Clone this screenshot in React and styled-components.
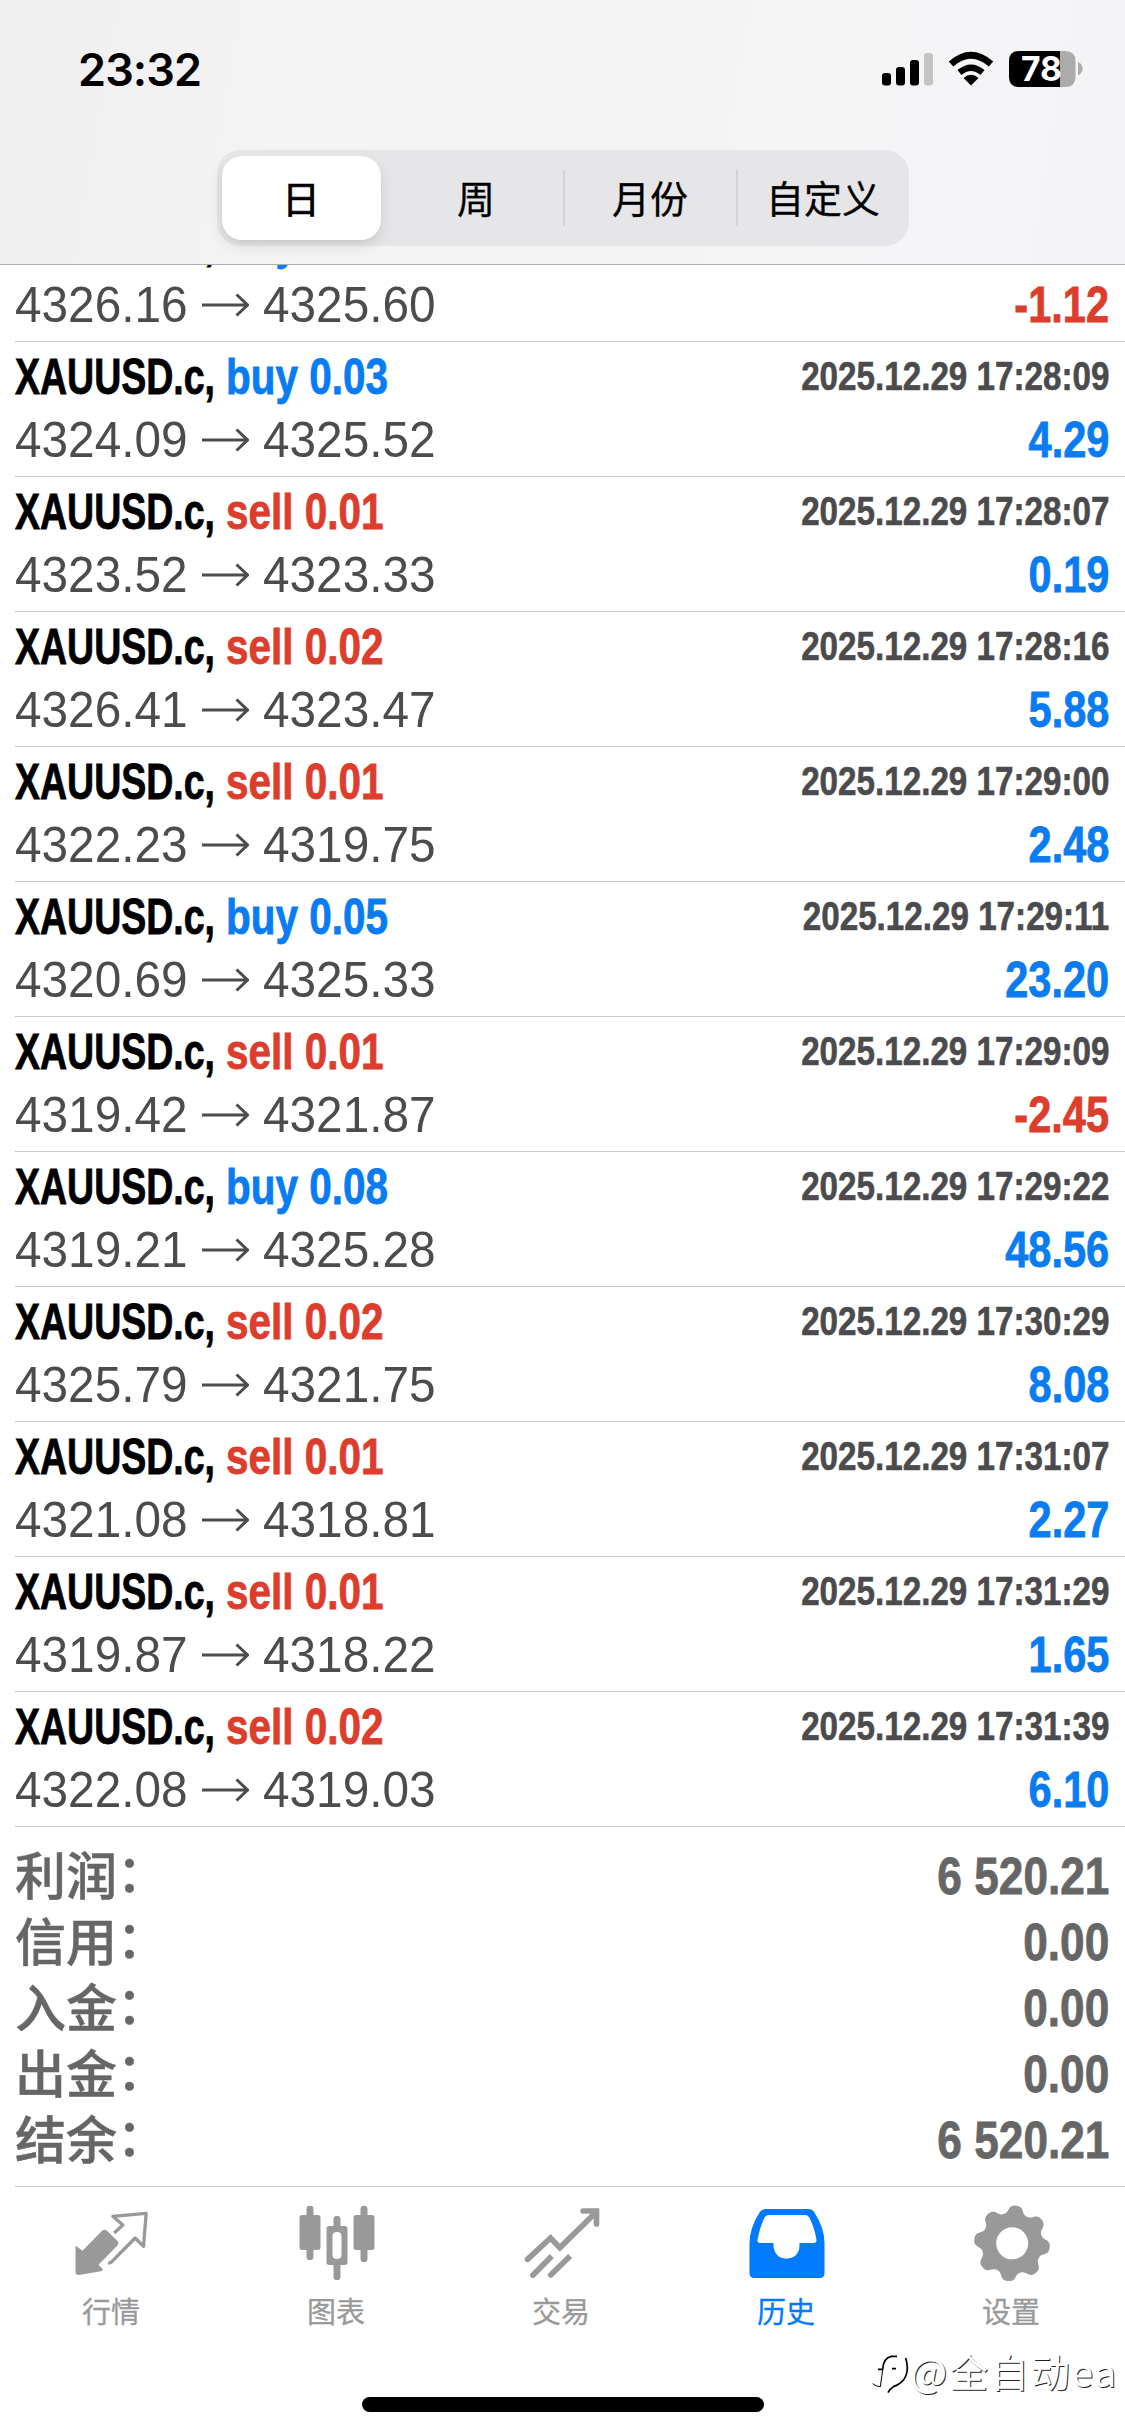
import React from "react";
import styled, { createGlobalStyle } from "styled-components";

const deals = [
    { side: "buy", volume: "0.02", time: "2025.12.29 17:28:02", open: "4326.16", close: "4325.60", profit: "-1.12" },
    { side: "buy", volume: "0.03", time: "2025.12.29 17:28:09", open: "4324.09", close: "4325.52", profit: "4.29" },
    { side: "sell", volume: "0.01", time: "2025.12.29 17:28:07", open: "4323.52", close: "4323.33", profit: "0.19" },
    { side: "sell", volume: "0.02", time: "2025.12.29 17:28:16", open: "4326.41", close: "4323.47", profit: "5.88" },
    { side: "sell", volume: "0.01", time: "2025.12.29 17:29:00", open: "4322.23", close: "4319.75", profit: "2.48" },
    { side: "buy", volume: "0.05", time: "2025.12.29 17:29:11", open: "4320.69", close: "4325.33", profit: "23.20" },
    { side: "sell", volume: "0.01", time: "2025.12.29 17:29:09", open: "4319.42", close: "4321.87", profit: "-2.45" },
    { side: "buy", volume: "0.08", time: "2025.12.29 17:29:22", open: "4319.21", close: "4325.28", profit: "48.56" },
    { side: "sell", volume: "0.02", time: "2025.12.29 17:30:29", open: "4325.79", close: "4321.75", profit: "8.08" },
    { side: "sell", volume: "0.01", time: "2025.12.29 17:31:07", open: "4321.08", close: "4318.81", profit: "2.27" },
    { side: "sell", volume: "0.01", time: "2025.12.29 17:31:29", open: "4319.87", close: "4318.22", profit: "1.65" },
    { side: "sell", volume: "0.02", time: "2025.12.29 17:31:39", open: "4322.08", close: "4319.03", profit: "6.10" },
];

const totals = [
    { label: "利润", value: "6 520.21" },
    { label: "信用", value: "0.00" },
    { label: "入金", value: "0.00" },
    { label: "出金", value: "0.00" },
    { label: "结余", value: "6 520.21" },
];

const periods = ["日", "周", "月份", "自定义"];

function gearPath(cx, cy) {
    // eight rounded teeth, slightly turned
    const points = [];
    for (let i = 0; i < 160; i++) {
        const a = (i / 160) * Math.PI * 2;
        const wave = Math.cos(8 * (a - 0.11));
        const r = 102 + 11.5 * Math.tanh(1.4 * wave + 0.2) / Math.tanh(1.5);
        points.push(`${(cx + r * Math.cos(a)).toFixed(1)} ${(cy + r * Math.sin(a)).toFixed(1)}`);
    }
    return `M${points.join("L")}Z`;
}

function QuotesIcon() {
    return (
        <Icon viewBox="82.5 60 270 252">
            <path
                d="M108 199L126 212L184 153Q192 146 200 153L231 183Q237 190 230 197L174 254L187 268Q187 273 181 274L115 285Q105 285 105 276V201Q105 197 108 199Z"
                fill="currentColor"
            />
            <path
                d="M221 159L247 135L217 109L317 100L309 199L284 174L214 245Q208 250 203 248"
                fill="none"
                stroke="currentColor"
                strokeWidth="10"
                strokeLinejoin="round"
            />
        </Icon>
    );
}

function ChartIcon() {
    return (
        <Icon viewBox="757.5 60 270 252" fill="currentColor">
            <rect x="798" y="77" width="21" height="163" rx="10" />
            <rect x="777" y="105" width="63" height="105" rx="8" />
            <rect x="960" y="77" width="21" height="169" rx="10" />
            <rect x="939" y="105" width="63" height="105" rx="8" />
            <rect x="879" y="108" width="21" height="40" rx="10" />
            <rect x="879" y="245" width="21" height="55" rx="10" />
            <path
                fillRule="evenodd"
                d="M866 138H913Q921 138 921 146V247Q921 255 913 255H866Q858 255 858 247V146Q858 138 866 138ZM889.500 156Q876 156 876 169V225Q876 237 889.500 237Q903 237 903 225V169Q903 156 889.500 156Z"
            />
        </Icon>
    );
}

function TradeIcon() {
    return (
        <Icon viewBox="112.5 60 270 252" fill="none" stroke="currentColor" strokeWidth="17">
            <path d="M141 238L210 174L238 203L345 98" strokeLinecap="round" />
            <path d="M308 93H348V132" strokeLinecap="round" />
            <path d="M214 228L163 280M269 228L216 280" />
            <path d="M157 286L163 280M211 285L216 280" strokeLinecap="round" />
        </Icon>
    );
}

function HistoryIcon() {
    return (
        <Icon viewBox="787.5 60 270 252">
            <path
                fillRule="evenodd"
                fill="currentColor"
                d="M856 87H984Q995 87 1001 96Q1032 144 1032 190V280Q1032 294 1018 294H821Q807 294 807 280V190Q807 144 838 96Q844 87 856 87ZM866 105Q856 105 851 115Q838 142 831 180Q830 189 839 189H879V196C880 222 896 236 918 236C940 236 957 222 957 196V189H999Q1009 189 1008 180Q1002 142 986 112Q982 105 973 105Z"
            />
        </Icon>
    );
}

function SettingsIcon() {
    return (
        <Icon viewBox="367.5 60 270 252">
            <path d={gearPath(499.5, 190)} fill="currentColor" />
            <circle cx="500" cy="190" r="48" fill="#ffffff" />
        </Icon>
    );
}

const tabs = [
    { label: "行情", icon: QuotesIcon },
    { label: "图表", icon: ChartIcon },
    { label: "交易", icon: TradeIcon },
    { label: "历史", icon: HistoryIcon, active: true },
    { label: "设置", icon: SettingsIcon },
];

function StatusIcons() {
    return (
        <svg width="202" height="40" viewBox="881 49 202 40">
            <rect x="882" y="73" width="9" height="12.500" rx="3" />
            <rect x="896" y="67" width="9" height="18.500" rx="3" />
            <rect x="910" y="60" width="9" height="25.500" rx="3" />
            <rect x="924" y="53" width="9" height="32.500" rx="3" fill="#c4c4c5" />
            <path d="M971 85.500L963.500 78Q971 71.500 978.500 78Z" />
            <path d="M959.500 72.500Q971 63 982.500 72.500" fill="none" stroke="#000" strokeWidth="6.500" />
            <path d="M951 64Q971 46.500 991 64" fill="none" stroke="#000" strokeWidth="6.800" />
            <path d="M1019 51H1060V87H1019Q1009 87 1009 77V61Q1009 51 1019 51Z" />
            <path d="M1060 51H1065Q1075.500 51 1075.500 61V77Q1075.500 87 1065 87H1060Z" fill="#ababab" />
            <path d="M1078 62Q1082.500 64 1082.500 68.500Q1082.500 73 1078 75.500Z" fill="#ababab" />
            <text x="1041.500" y="81" fontSize="34" fontWeight="700" fontFamily="Inter, sans-serif" textAnchor="middle" textLength="41" lengthAdjust="spacingAndGlyphs" fill="#fff">
                78
            </text>
        </svg>
    );
}

function DealRow({ deal }) {
    return (
        <Deal>
            <Line>
                <Symbol>XAUUSD.c,</Symbol>
                <Side $side={deal.side}>{deal.side} {deal.volume}</Side>
                <Time>{deal.time}</Time>
            </Line>
            <Line>
                <Price>{deal.open}</Price>
                <Arrow viewBox="0 0 47 24">
                    <path d="M0 12H45M34.500 1.500L45.500 12L34.500 22.500" fill="none" stroke="currentColor" strokeWidth="3" />
                </Arrow>
                <Price>{deal.close}</Price>
                <Profit $loss={deal.profit.startsWith("-")}>{deal.profit}</Profit>
            </Line>
        </Deal>
    );
}

export default function App() {
    return (
        <Screen>
            <GlobalStyle />
            <Header>
                <StatusBar>
                    <Clock>23:32</Clock>
                    <StatusIcons />
                </StatusBar>
                <Segmented>
                    {periods.map((period, i) => (
                        <Segment key={period} $selected={i === 0} $divided={i > 1}>
                            {period}
                        </Segment>
                    ))}
                </Segmented>
            </Header>
            <History>
                {deals.map((deal) => (
                    <DealRow key={deal.time} deal={deal} />
                ))}
            </History>
            <Totals>
                {totals.map((total) => (
                    <TotalRow key={total.label}>
                        <TotalLabel>
                            {total.label}
                            <Colon>：</Colon>
                        </TotalLabel>
                        <TotalValue>{total.value}</TotalValue>
                    </TotalRow>
                ))}
            </Totals>
            <TabBar>
                {tabs.map(({ label, icon: TabIcon, active }) => (
                    <Tab key={label} $active={active}>
                        <TabIcon />
                        <TabLabel>{label}</TabLabel>
                    </Tab>
                ))}
            </TabBar>
            <HomeIndicator />
            <Watermark>
                <svg width="38" height="40" viewBox="15 58 114 120" fill="none" stroke="#000">
                    <path d="M36 104H50Q52 70 76 65H93M78 102H90" strokeWidth="5" />
                    <path d="M119 70Q131 108 114 134Q102 150 82 156Q72 162 66 174" strokeWidth="5" />
                    <path d="M50 106L43 156Q30 156 20 147" strokeWidth="3" />
                </svg>
                <span>@全自动ea</span>
            </Watermark>
        </Screen>
    );
}

const GlobalStyle = createGlobalStyle`
    body {
        margin: 0;
        background: #ffffff;
    }

    * {
        box-sizing: border-box;
    }
`;

const Screen = styled.div`
    position: relative;
    display: flex;
    flex-direction: column;
    width: 1125px;
    height: 2436px;
    overflow: hidden;
    background: #ffffff;
    font-family: "Liberation Sans", "Noto Sans CJK SC", sans-serif;
`;

const Header = styled.header`
    display: flex;
    flex-direction: column;
    align-items: center;
    flex: none;
    height: 265px;
    border-bottom: 1px solid #b0b0b2;
    background: linear-gradient(100deg, #efeff0 0%, #f4f4f5 30%, #f5f4f5 60%, #f4f4f7 100%);
`;

const StatusBar = styled.div`
    display: flex;
    align-items: center;
    justify-content: space-between;
    width: 100%;
    height: 150px;
    padding: 0 42px 12px 78px;
`;

const Clock = styled.span`
    font-family: Inter, sans-serif;
    font-size: 45px;
    font-weight: 600;
    letter-spacing: -0.9px;
    color: #000000;
`;

const Segmented = styled.div`
    display: grid;
    grid-template-columns: repeat(4, 1fr);
    width: 692px;
    height: 96px;
    border-radius: 24px;
    background: #e6e6e8;
`;

const Segment = styled.div`
    display: flex;
    align-items: center;
    justify-content: center;
    margin: ${({ $selected }) => ($selected ? "6px 9px 6px 5px" : "20px 0")};
    padding-bottom: 3px;
    border-left: ${({ $divided }) => ($divided ? "2px solid #d2d2d4" : "none")};
    border-radius: ${({ $selected }) => ($selected ? "20px" : "0")};
    background: ${({ $selected }) => ($selected ? "#ffffff" : "transparent")};
    box-shadow: ${({ $selected }) => ($selected ? "0 6px 16px rgba(0, 0, 0, 0.1), 0 2px 3px rgba(0, 0, 0, 0.04)" : "none")};
    font-family: "Noto Sans CJK SC", sans-serif;
    font-size: 38px;
    line-height: 50px;
    font-weight: 400;
    -webkit-text-stroke: ${({ $selected }) => ($selected ? "0.7px" : "0.3px")} currentColor;
    color: #000000;
`;

const History = styled.main`
    display: flex;
    flex-direction: column;
    justify-content: flex-end;
    flex: none;
    height: 1562px;
    overflow: hidden;
    padding-left: 15px;
`;

const Deal = styled.div`
    display: flex;
    flex-direction: column;
    flex: none;
    height: 135px;
    padding-top: 3px;
    border-bottom: 1px solid #c8c7cc;
`;

const Line = styled.div`
    display: flex;
    align-items: center;
    height: 63px;
    padding-right: 16px;
    white-space: pre;
`;

const Condensed = styled.span`
    font-size: 50px;
    font-weight: 700;
    line-height: 60px;
    -webkit-text-stroke: 0.8px currentColor;
    transform-origin: left center;
`;

const Symbol = styled(Condensed)`
    flex: none;
    width: 211px;
    transform: scaleX(0.75);
    color: #000000;
`;

const Side = styled(Condensed)`
    transform: scaleX(0.81);
    color: ${({ $side }) => ($side === "buy" ? "#087cf0" : "#dc3d2c")};
`;

const Time = styled(Condensed)`
    margin: 0 0 2px auto;
    font-size: 40px;
    -webkit-text-stroke-width: 0.6px;
    transform: scaleX(0.83);
    transform-origin: right center;
    color: #4b4b4e;
`;

const Price = styled.span`
    flex: none;
    width: 187px;
    font-size: 50px;
    line-height: 60px;
    transform: scaleX(0.955);
    transform-origin: left center;
    color: #4c4c4f;
`;

const Arrow = styled.svg`
    flex: none;
    width: 47px;
    height: 24px;
    margin: 0 14px 0 0;
    color: #4c4c4f;
`;

const Profit = styled(Condensed)`
    margin-left: auto;
    transform: scaleX(0.83);
    transform-origin: right center;
    color: ${({ $loss }) => ($loss ? "#dc3d2c" : "#087cf0")};
`;

const Totals = styled.section`
    display: flex;
    flex-direction: column;
    flex: none;
    height: 360px;
    padding: 16px 16px 0 0;
    margin-left: 15px;
    border-bottom: 1px solid #c8c7cc;
`;

const TotalRow = styled.div`
    display: flex;
    align-items: center;
    justify-content: space-between;
    height: 66px;
    color: #666666;
`;

const TotalLabel = styled.span`
    margin-bottom: 7px;
    font-family: "Noto Sans CJK SC", sans-serif;
    font-size: 51px;
    font-weight: 500;
    line-height: 58px;
    -webkit-text-stroke: 0.5px currentColor;
`;

const Colon = styled.span`
    margin-left: -13px;
    font-family: "Noto Sans CJK TC", sans-serif;
`;

const TotalValue = styled(Condensed)`
    font-size: 52px;
    transform: scaleX(0.85);
    transform-origin: right center;
`;

const TabBar = styled.nav`
    display: grid;
    grid-template-columns: repeat(5, 1fr);
    flex: none;
    height: 160px;
    padding-top: 13px;
`;

const Tab = styled.div`
    display: flex;
    flex-direction: column;
    align-items: center;
    color: ${({ $active }) => ($active ? "#007aff" : "#999999")};
`;

const TabLabel = styled.span`
    padding-right: 3px;
    font-family: "Noto Sans CJK SC", sans-serif;
    font-size: 29px;
    line-height: 52px;
    -webkit-text-stroke: 0.3px currentColor;
`;

const Icon = styled.svg`
    width: 90px;
    height: 84px;
`;

const HomeIndicator = styled.div`
    align-self: center;
    width: 402px;
    height: 15px;
    margin-top: 50px;
    border-radius: 8px;
    background: #000000;
`;

const Watermark = styled.div`
    position: absolute;
    right: 7px;
    bottom: 34px;
    display: flex;
    align-items: center;
    gap: 1px;
    font-family: "Noto Sans CJK SC", sans-serif;
    font-size: 39px;
    line-height: 50px;
    letter-spacing: 1.8px;
    color: #ffffff;
    text-shadow: 1px 1px 0 #222222;

    span {
        margin-bottom: 7px;
    }
`;
